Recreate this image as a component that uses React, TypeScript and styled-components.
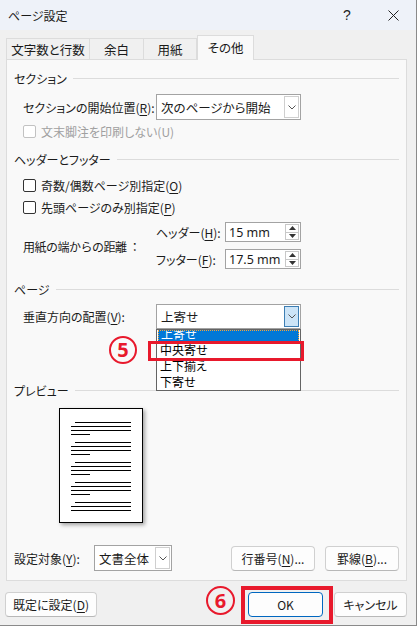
import styled, { createGlobalStyle } from 'styled-components';

const GlobalStyle = createGlobalStyle`
    html, body {
        margin: 0;
        padding: 0;
        background: #f0f0f0;
    }
    body {
        font-family: "Noto Sans CJK JP", "Noto Sans", sans-serif;
        font-size: 12px;
        color: #1b1b1b;
        font-feature-settings: "palt";
    }
`;

const Chevron = () => (
    <svg width="8" height="5" viewBox="0 0 8 5">
        <polyline points="0.5,0.5 4,4 7.5,0.5" fill="none" stroke="#555" strokeWidth="1" />
    </svg>
);

const Triangle = ({ up }: { up?: boolean }) => (
    <svg width="7" height="4" viewBox="0 0 7 4">
        <polygon points={up ? '0,4 3.5,0 7,4' : '0,0 3.5,4 7,0'} fill="#333" />
    </svg>
);

const Check = ({ label, disabled }: { label: React.ReactNode; disabled?: boolean }) => (
    <CheckRow $disabled={disabled}>
        <Box $disabled={disabled} />
        <span>{label}</span>
    </CheckRow>
);

const Spin = ({ value }: { value: string }) => (
    <SpinBox>
        <SpinValue>{value}</SpinValue>
        <SpinCol>
            <SpinHalf>
                <Triangle up />
            </SpinHalf>
            <SpinHalf>
                <Triangle />
            </SpinHalf>
        </SpinCol>
    </SpinBox>
);

const PreviewPage = () => {
    const groups = [0, 1, 2, 3, 4];
    return (
        <PageSheet>
            <svg width="82" height="113" viewBox="0 0 82 113">
                {groups.map((g) => {
                    const y = 13.5 + g * 20;
                    return (
                        <g key={g} stroke="#000" strokeWidth="1">
                            <line x1="15" x2="71" y1={y} y2={y} />
                            <line x1="11" x2="71" y1={y + 4} y2={y + 4} />
                            <line x1="11" x2="71" y1={y + 8} y2={y + 8} />
                            {g < 4 && <line x1="11" x2="30" y1={y + 12} y2={y + 12} />}
                        </g>
                    );
                })}
            </svg>
        </PageSheet>
    );
};

const App = () => {
    return (
        <>
            <GlobalStyle />
            <Dialog>
                <TitleBar>
                    <Title>ページ設定</Title>
                    <TitleButton>?</TitleButton>
                    <TitleButton>
                        <svg width="11" height="11" viewBox="0 0 11 11">
                            <path d="M0.5 0.5 L10.5 10.5 M10.5 0.5 L0.5 10.5" stroke="#222" strokeWidth="1" />
                        </svg>
                    </TitleButton>
                </TitleBar>
                <Body>
                    <TabRow>
                        <Tab $w={84}>文字数と行数</Tab>
                        <Tab $w={54}>余白</Tab>
                        <Tab $w={53}>用紙</Tab>
                        <Tab $w={57} $active>その他</Tab>
                    </TabRow>
                    <Panel>
                        <Heading>
                            <span>セクション</span>
                            <Rule />
                        </Heading>
                        <FieldRow $top={8}>
                            <Label>
                                セクションの開始位置(<u>R</u>):
                            </Label>
                            <Select $h={26}>
                                <SelectValue>次のページから開始</SelectValue>
                                <DropButton>
                                    <Chevron />
                                </DropButton>
                            </Select>
                        </FieldRow>
                        <Indent $top={3}>
                            <Check disabled label="文末脚注を印刷しない(U)" />
                        </Indent>

                        <Heading $top={12}>
                            <span>ヘッダーとフッター</span>
                            <Rule />
                        </Heading>
                        <Indent $top={10}>
                            <Check
                                label={
                                    <>
                                        奇数/偶数ページ別指定(<u>O</u>)
                                    </>
                                }
                            />
                        </Indent>
                        <Indent $top={6}>
                            <Check
                                label={
                                    <>
                                        先頭ページのみ別指定(<u>P</u>)
                                    </>
                                }
                            />
                        </Indent>
                        <DistanceGrid>
                            <DistanceLabel>用紙の端からの距離 ：</DistanceLabel>
                            <Label>
                                ヘッダー(<u>H</u>):
                            </Label>
                            <Spin value="15 mm" />
                            <Label>
                                フッター(<u>F</u>):
                            </Label>
                            <Spin value="17.5 mm" />
                        </DistanceGrid>

                        <Heading $top={12}>
                            <span>ページ</span>
                            <Rule />
                        </Heading>
                        <FieldRow $top={7}>
                            <Label>
                                垂直方向の配置(<u>V</u>):
                            </Label>
                            <SelectWrap>
                                <Select $h={25}>
                                    <SelectValue>上寄せ</SelectValue>
                                    <DropButton $open>
                                        <Chevron />
                                    </DropButton>
                                </Select>
                                <DropList>
                                    <FirstItem>上寄せ</FirstItem>
                                    <ListItem>中央寄せ</ListItem>
                                    <ListItem>上下揃え</ListItem>
                                    <ListItem>下寄せ</ListItem>
                                </DropList>
                            </SelectWrap>
                        </FieldRow>

                        <Heading $top={53}>
                            <span>プレビュー</span>
                            <Rule />
                        </Heading>
                        <PreviewPage />

                        <BottomRow>
                            <TargetLabel>
                                設定対象(<u>Y</u>):
                            </TargetLabel>
                            <Select $h={26} $w={78}>
                                <SelectValue>文書全体</SelectValue>
                                <DropButton>
                                    <Chevron />
                                </DropButton>
                            </Select>
                            <Spacer />
                            <Button $w={84}>
                                行番号(<u>N</u>)...
                            </Button>
                            <Button $w={74}>
                                罫線(<u>B</u>)...
                            </Button>
                        </BottomRow>
                    </Panel>
                    <Footer>
                        <Button $w={92}>
                            既定に設定(<u>D</u>)
                        </Button>
                        <Spacer />
                        <Button $w={75} $primary>
                            OK
                        </Button>
                        <Button $w={73}>キャンセル</Button>
                    </Footer>
                </Body>

                <Mark $x={148} $y={341} $w={156} $h={20} $t={3.5} />
                <Mark $x={241} $y={586} $w={92} $h={38} $t={4} />
                <StepBadge $x={109} $y={336} $size={28}>
                    5
                </StepBadge>
                <StepBadge $x={206} $y={586} $size={29}>
                    6
                </StepBadge>
            </Dialog>
        </>
    );
};

export default App;

const Dialog = styled.div`
    position: relative;
    width: 417px;
    height: 626px;
    box-sizing: border-box;
    border-right: 1px solid #8a8a8a;
    border-bottom: 1px solid #8a8a8a;
    background: #f0f0f0;
    display: flex;
    flex-direction: column;
    overflow: hidden;
`;

const TitleBar = styled.div`
    height: 30px;
    flex-shrink: 0;
    display: flex;
    align-items: center;
    padding-left: 8px;
    background: #eef2f9;
`;

const Title = styled.div`
    flex: 1;
    font-size: 12px;
    color: #1a1a1a;
`;

const TitleButton = styled.div`
    width: 46px;
    height: 30px;
    display: flex;
    align-items: center;
    justify-content: center;
    font-family: "Liberation Sans", sans-serif;
    font-size: 14px;
    color: #222;
`;

const Body = styled.div`
    flex: 1;
    display: flex;
    flex-direction: column;
    padding: 6px 9px 0 6px;
`;

const TabRow = styled.div`
    display: flex;
    align-items: flex-end;
    height: 24px;
    position: relative;
    z-index: 1;
    margin-bottom: -1px;
`;

const Tab = styled.div<{ $w: number; $active?: boolean }>`
    width: ${(p) => p.$w}px;
    height: ${(p) => (p.$active ? 25 : 22)}px;
    box-sizing: border-box;
    display: flex;
    align-items: center;
    justify-content: center;
    padding-bottom: ${(p) => (p.$active ? 1 : 0)}px;
    border: 1px solid #dcdcdc;
    border-bottom: ${(p) => (p.$active ? 'none' : '1px solid #dcdcdc')};
    border-left: ${(p) => (p.$active ? '1px solid #dcdcdc' : 'none')};
    &:first-child {
        border-left: 1px solid #dcdcdc;
    }
    background: ${(p) => (p.$active ? '#f9f9f9' : '#f0f0f0')};
    font-size: 12.5px;
`;

const Panel = styled.div`
    height: 522px;
    box-sizing: border-box;
    border: 1px solid #dcdcdc;
    background: #f9f9f9;
    display: flex;
    flex-direction: column;
    padding: 10px 7px 9px 7px;
`;

const Heading = styled.div<{ $top?: number }>`
    display: flex;
    align-items: center;
    height: 16px;
    margin-top: ${(p) => p.$top ?? 0}px;
    white-space: nowrap;
`;

const Rule = styled.div`
    flex: 1;
    height: 1px;
    margin-left: 6px;
    background: #dcdcdc;
`;

const FieldRow = styled.div<{ $top: number }>`
    display: grid;
    grid-template-columns: 133px 145px;
    align-items: center;
    margin-top: ${(p) => p.$top}px;
    padding-left: 9px;
`;

const Label = styled.div`
    white-space: nowrap;
    u {
        text-underline-offset: 2px;
    }
`;

const Select = styled.div<{ $h: number; $w?: number }>`
    height: ${(p) => p.$h}px;
    width: ${(p) => (p.$w ? `${p.$w}px` : 'auto')};
    box-sizing: border-box;
    display: flex;
    border: 1px solid #a3a3a3;
    background: #fff;
`;

const SelectWrap = styled.div`
    position: relative;
`;

const SelectValue = styled.div`
    flex: 1;
    display: flex;
    align-items: center;
    padding-left: 4px;
    font-size: 12.5px;
    white-space: nowrap;
    overflow: hidden;
`;

const DropButton = styled.div<{ $open?: boolean }>`
    width: 15px;
    margin: 1px;
    box-sizing: border-box;
    display: flex;
    align-items: center;
    justify-content: center;
    border: 1px solid ${(p) => (p.$open ? '#3d7eb3' : '#cfcfcf')};
    background: ${(p) => (p.$open ? '#cce4f7' : '#fff')};
`;

const DropList = styled.div`
    position: absolute;
    top: 100%;
    left: 0;
    right: 0;
    box-sizing: border-box;
    border: 1px solid #646464;
    background: #fff;
    z-index: 5;
`;

const FirstItem = styled.div`
    height: 12px;
    margin: 0 1px;
    box-sizing: border-box;
    border: 1px dotted #f2a33a;
    background: #0078d7;
    color: #fff;
    line-height: 6px;
    padding-left: 2px;
    overflow: hidden;
    font-size: 12px;
`;

const ListItem = styled.div`
    height: 16px;
    line-height: 16px;
    padding-left: 3px;
    font-size: 12px;
    color: #000;
`;

const Indent = styled.div<{ $top: number }>`
    padding-left: 9px;
    margin-top: ${(p) => p.$top}px;
`;

const CheckRow = styled.div<{ $disabled?: boolean }>`
    display: flex;
    align-items: center;
    gap: 5px;
    height: 16px;
    color: ${(p) => (p.$disabled ? '#a0a0a0' : '#1b1b1b')};
    white-space: nowrap;
    u {
        text-underline-offset: 2px;
    }
`;

const Box = styled.div<{ $disabled?: boolean }>`
    width: 13px;
    height: 13px;
    box-sizing: border-box;
    border: 1px solid ${(p) => (p.$disabled ? '#c2c2c2' : '#333')};
    border-radius: 2px;
    background: #fff;
`;

const DistanceGrid = styled.div`
    display: grid;
    grid-template-columns: 133px 69px 76px;
    grid-template-rows: 20px 20px;
    row-gap: 7px;
    align-items: center;
    margin-top: 7px;
    padding-left: 9px;
`;

const DistanceLabel = styled.div`
    grid-row: 1 / 3;
    white-space: nowrap;
    padding-top: 2px;
    font-feature-settings: normal;
    letter-spacing: -0.5px;
`;

const SpinBox = styled.div`
    height: 20px;
    box-sizing: border-box;
    display: flex;
    border: 1px solid #a3a3a3;
    background: #fff;
`;

const SpinValue = styled.div`
    flex: 1;
    display: flex;
    align-items: center;
    padding-left: 3px;
    font-family: "Noto Sans", sans-serif;
    font-size: 12.5px;
    white-space: nowrap;
`;

const SpinCol = styled.div`
    width: 14px;
    margin: 1px;
    box-sizing: border-box;
    display: flex;
    flex-direction: column;
    border: 1px solid #c8c8c8;
`;

const SpinHalf = styled.div`
    flex: 1;
    display: flex;
    align-items: center;
    justify-content: center;
    & + & {
        border-top: 1px solid #c8c8c8;
    }
`;

const PageSheet = styled.div`
    width: 84px;
    height: 115px;
    box-sizing: border-box;
    margin: 10px 0 0 45px;
    border: 1px solid #000;
    background: #fff;
    box-shadow: 2px 2px 4px rgba(0, 0, 0, 0.35);
    line-height: 0;
`;

const BottomRow = styled.div`
    display: flex;
    align-items: center;
    gap: 10px;
    margin-top: auto;
`;

const TargetLabel = styled.div`
    width: 70px;
    white-space: nowrap;
    u {
        text-underline-offset: 2px;
    }
`;

const Spacer = styled.div`
    flex: 1;
`;

const Button = styled.div<{ $w: number; $primary?: boolean }>`
    width: ${(p) => p.$w}px;
    height: 25px;
    box-sizing: border-box;
    display: flex;
    align-items: center;
    justify-content: center;
    border: 1px solid ${(p) => (p.$primary ? '#0067c0' : '#d0d0d0')};
    border-bottom-color: ${(p) => (p.$primary ? '#0067c0' : '#b8b8b8')};
    border-radius: 4px;
    background: #fdfdfd;
    white-space: nowrap;
    font-size: 12px;
    u {
        text-underline-offset: 2px;
    }
`;

const Footer = styled.div`
    display: flex;
    align-items: center;
    gap: 11px;
    margin: 11px 0 0 -1px;
`;

const Mark = styled.div<{ $x: number; $y: number; $w: number; $h: number; $t: number }>`
    position: absolute;
    left: ${(p) => p.$x}px;
    top: ${(p) => p.$y}px;
    width: ${(p) => p.$w}px;
    height: ${(p) => p.$h}px;
    box-sizing: border-box;
    border: ${(p) => p.$t}px solid #e8192c;
    z-index: 10;
`;

const StepBadge = styled.div<{ $x: number; $y: number; $size: number }>`
    position: absolute;
    left: ${(p) => p.$x}px;
    top: ${(p) => p.$y}px;
    width: ${(p) => p.$size}px;
    height: ${(p) => p.$size}px;
    box-sizing: border-box;
    border: 2px solid #e8192c;
    border-radius: 50%;
    display: flex;
    align-items: center;
    justify-content: center;
    color: #e8192c;
    font-family: "Noto Sans", sans-serif;
    font-weight: 700;
    font-size: 20px;
    line-height: 1;
    z-index: 10;
`;
